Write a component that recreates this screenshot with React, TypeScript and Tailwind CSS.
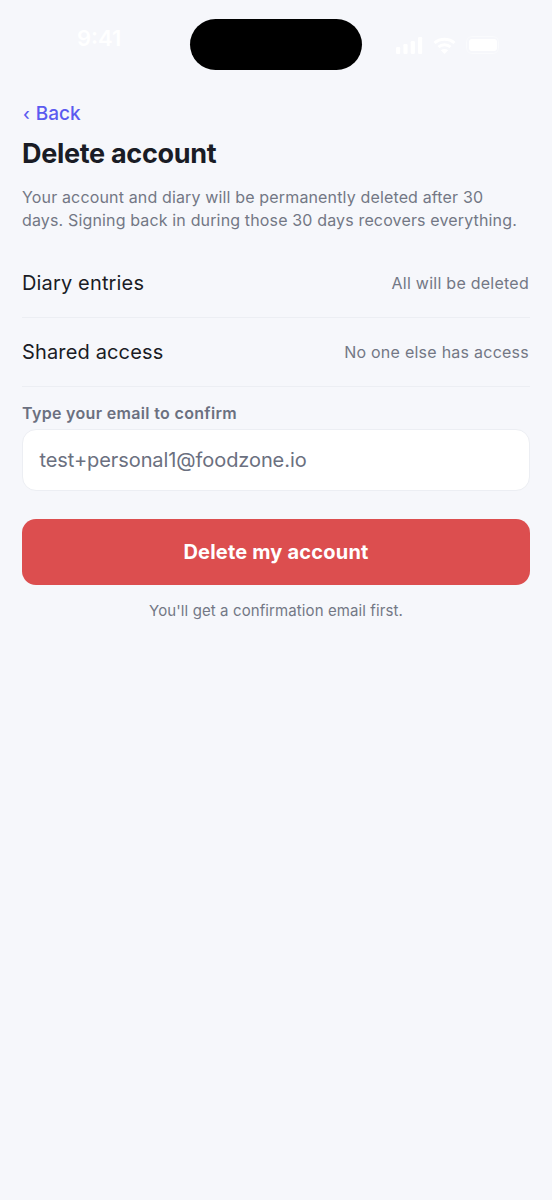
import React from 'react';

const rows = [
  { label: 'Diary entries', value: 'All will be deleted' },
  { label: 'Shared access', value: 'No one else has access' },
];

const StatusIcons = () => (
  <div className="flex items-center">
    <svg width="27" height="17" viewBox="0 0 27 17" fill="#ffffff">
      <rect x="0" y="10" width="4.2" height="7" rx="1.2" />
      <rect x="7.4" y="7" width="4.2" height="10" rx="1.2" />
      <rect x="14.7" y="4" width="4.2" height="13" rx="1.2" />
      <rect x="22" y="0" width="4.2" height="17" rx="1.2" />
    </svg>
    <svg className="ml-[10px]" width="23" height="17" viewBox="0 0 23 17" fill="none" stroke="#ffffff" strokeWidth="3">
      <path d="M1.5 6C7 1 16 1 21.5 6" />
      <path d="M5.5 10C8.8 7 14.2 7 17.5 10" />
      <path d="M11.5 17L7.8 13.2C10 11.6 13 11.6 15.2 13.2Z" fill="#ffffff" stroke="none" />
    </svg>
    <div className="ml-[10px] flex h-[18px] w-[33px] items-center justify-center rounded-[6px] border border-[#fafbfd]">
      <div className="h-[12px] w-[28px] rounded-[3px] bg-white" />
    </div>
  </div>
);

export default function App() {
  return (
    <div className="min-h-[1200px] bg-[#f6f7fb] font-['Inter',sans-serif]">
      <div className="relative flex h-[70px] items-start justify-between pl-[77px] pr-[53px] pt-[19px]">
        <span className="pt-[6px] text-[22px] font-semibold leading-[26px] text-white">9:41</span>
        <div className="absolute left-[190px] top-[19px] h-[51px] w-[172px] rounded-full bg-black" />
        <div className="pt-[17px]">
          <StatusIcons />
        </div>
      </div>

      <div className="px-[22px] pt-[31px]">
        <a className="flex items-baseline pl-[1px] text-[19px] font-medium leading-[26px] text-[#5b5bf0]">
          <span className="text-[17px]">‹</span>
          <span className="ml-[6px]">Back</span>
        </a>
        <h1 className="mt-[9px] text-[27px] font-bold leading-[36px] tracking-[-0.3px] text-[#1a1c25]">
          Delete account
        </h1>
        <p className="mt-[14px] pr-[6px] text-[16px] leading-[23px] tracking-[0.15px] text-[#737785]">
          Your account and diary will be permanently deleted after 30 days. Signing back in during those 30 days recovers everything.
        </p>

        <div className="mt-[17px]">
          {rows.map(row => (
            <div
              key={row.label}
              className="flex h-[69px] items-center justify-between border-b border-[#eceef3] pr-[1px]"
            >
              <span className="text-[20px] tracking-[0.15px] text-[#1a1c25]">{row.label}</span>
              <span className="text-[16px] tracking-[0.25px] text-[#737785]">{row.value}</span>
            </div>
          ))}
        </div>

        <label className="mt-[16px] block text-[16px] font-semibold leading-[20px] tracking-[0.33px] text-[#6b7080]">
          Type your email to confirm
        </label>
        <div className="mt-[6px] flex h-[62px] items-center rounded-[14px] border border-[#eceef3] bg-white px-[16.5px]">
          <span className="text-[20px] tracking-[-0.08px] text-[#6b7080]">test+personal1@foodzone.io</span>
        </div>

        <button className="mt-[28px] flex h-[66px] w-full items-center justify-center rounded-[14px] bg-[#dc4e4f] text-[20px] font-bold tracking-[0.2px] text-white">
          Delete my account
        </button>
        <p className="mt-[16px] text-center text-[15px] leading-[20px] tracking-[0.1px] text-[#737785]">
          You'll get a confirmation email first.
        </p>
      </div>
    </div>
  );
}
